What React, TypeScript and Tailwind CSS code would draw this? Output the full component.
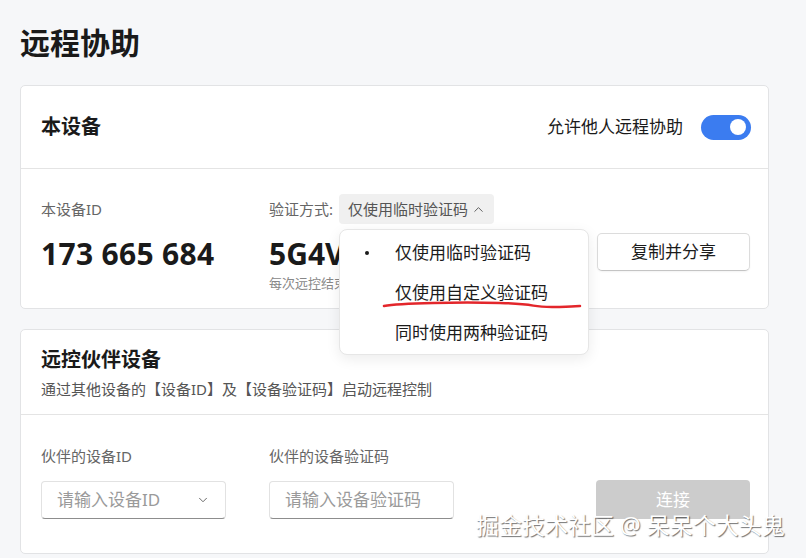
import { ChevronDown, ChevronUp } from 'lucide-react';

const font = "font-['Noto_Sans','Noto_Sans_CJK_SC',sans-serif]";

const options = ['仅使用临时验证码', '仅使用自定义验证码', '同时使用两种验证码'];

function Toggle() {
  return (
    <div className="w-[50px] h-[25px] rounded-full bg-[#3b7cf0] flex items-center justify-end pr-[5px]">
      <div className="w-[16px] h-[16px] rounded-full bg-white" />
    </div>
  );
}

function VerifyMenu() {
  return (
    <div className="absolute left-0 top-[35px] z-10 w-[250px] h-[126px] bg-white border border-[#e6e6e6] rounded-lg shadow-[0_4px_14px_rgba(0,0,0,0.08)] py-[3px]">
      {options.map((opt, i) => (
        <div key={opt} className="h-10 flex items-center text-[17px] text-[#1b1b1b]">
          <div className="w-[55px] flex justify-center pl-[2px] pr-[4px]">
            {i === 0 && <span className="w-[4px] h-[4px] rounded-full bg-[#1b1b1b]" />}
          </div>
          <span>{opt}</span>
        </div>
      ))}
      {/* 手绘红线 */}
      <svg className="absolute left-0 top-0 overflow-visible" width="250" height="126">
        <path
          d="M44 76 C 60 73, 120 72, 160 73 S 188 77, 212 77 S 234 76, 240 76"
          fill="none"
          stroke="#e3262b"
          strokeWidth="2.5"
          strokeLinecap="round"
        />
      </svg>
    </div>
  );
}

export default function App() {
  return (
    <div className={`${font} relative min-h-screen bg-[#f6f7f9] pl-5 pt-[20px] text-[#1a1a1a]`}>
      <h1 className="text-[30px] font-bold leading-[45px] mb-[20px]">远程协助</h1>

      {/* 本设备 */}
      <div className="w-[749px] bg-white border border-[#e2e3e5] rounded-[5px]">
        <div className="h-[83px] flex items-center justify-between pl-5 pr-[17px] border-b border-[#e4e4e4]">
          <span className="text-[20px] font-bold">本设备</span>
          <div className="flex items-center gap-[18px]">
            <span className="text-[17px] text-[#1b1b1b]">允许他人远程协助</span>
            <Toggle />
          </div>
        </div>
        <div className="flex pl-5 pt-[25px] pb-[16px]">
          <div className="w-[228px] flex flex-col">
            <div className="h-[30px] flex items-center text-[15px] text-[#666]">本设备ID</div>
            <div className="mt-[10px] leading-[40px] text-[30px] font-bold tracking-[0.3px]">173 665 684</div>
          </div>
          <div className="w-[328px] flex flex-col">
            <div className="h-[30px] flex items-center text-[15px] text-[#666]">
              <span>验证方式:</span>
              <div className="relative ml-[6px]">
                <div className="h-[30px] w-[155px] flex items-center justify-between pl-[9px] pr-[8px] bg-[#f0f0f0] rounded-[4px] text-[#555]">
                  <span>仅使用临时验证码</span>
                  <ChevronUp size={15} strokeWidth={1.5} />
                </div>
                <VerifyMenu />
              </div>
            </div>
            <div className="mt-[10px] leading-[40px] text-[30px] font-bold">5G4VK8</div>
            <div className="text-[13px] leading-[18px] text-[#888]">每次远控结束后自动刷新</div>
          </div>
          <div className="pt-[39px]">
            <button className="w-[153px] h-[38px] bg-white border border-[#dcdcdc] border-b-[#c4c4c4] rounded-[5px] text-[17px] text-[#1b1b1b] shadow-[0_1px_2px_rgba(0,0,0,0.05)]">
              复制并分享
            </button>
          </div>
        </div>
      </div>

      {/* 远控伙伴设备 */}
      <div className="w-[749px] mt-[20px] bg-white border border-[#e2e3e5] rounded-[5px]">
        <div className="px-5 pt-[16px] pb-[15px] border-b border-[#e4e4e4]">
          <div className="text-[20px] font-bold leading-[28px]">远控伙伴设备</div>
          <div className="mt-[5px] text-[15px] leading-[20px] text-[#555]">
            通过其他设备的【设备ID】及【设备验证码】启动远程控制
          </div>
        </div>
        <div className="flex items-end pl-5 pt-[30px] pb-[34px]">
          <div className="w-[228px]">
            <div className="text-[15px] leading-[22px] text-[#666]">伙伴的设备ID</div>
            <div className="mt-[14px] w-[185px] h-[38px] flex items-center justify-between px-[15px] bg-white border border-[#e2e2e2] border-b-[#8d8d8d] rounded-[4px] text-[17px] text-[#9a9a9a]">
              <span>请输入设备ID</span>
              <ChevronDown size={14} strokeWidth={1.5} className="text-[#555]" />
            </div>
          </div>
          <div className="w-[327px]">
            <div className="text-[15px] leading-[22px] text-[#666]">伙伴的设备验证码</div>
            <div className="mt-[14px] w-[185px] h-[38px] flex items-center px-[15px] bg-white border border-[#e2e2e2] border-b-[#8d8d8d] rounded-[4px] text-[17px] text-[#9a9a9a]">
              请输入设备验证码
            </div>
          </div>
          <button className="w-[154px] h-[39px] bg-[#cccccc] rounded-[4px] text-[17px] text-white">连接</button>
        </div>
      </div>

      {/* 水印 */}
      <div className="absolute left-[476px] top-[510px] text-[23px] leading-[30px] text-white [text-shadow:1px_1px_1px_rgba(0,0,0,0.55)] whitespace-nowrap">
        掘金技术社区 @ 呆呆个大头鬼
      </div>
    </div>
  );
}
